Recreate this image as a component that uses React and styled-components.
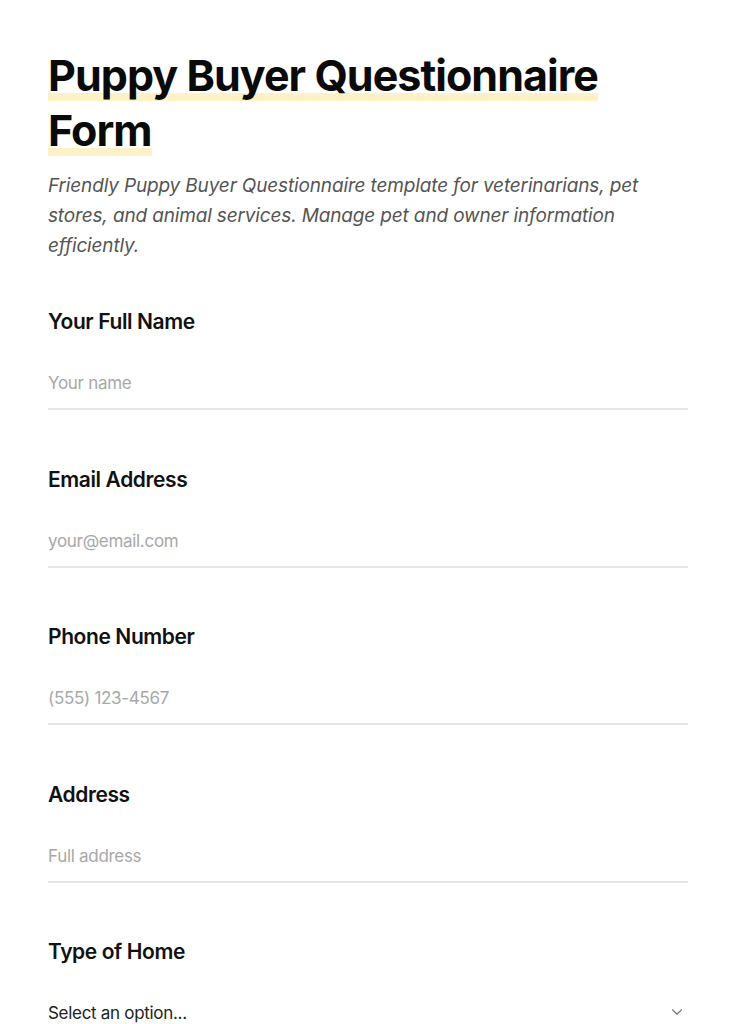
import React from 'react'
import styled, { createGlobalStyle } from 'styled-components'

const GlobalStyle = createGlobalStyle`
  body {
    margin: 0;
    background: #ffffff;
    font-family: Inter, "Open Sans", sans-serif;
    color: #111111;
  }
`

const fields = [
  { label: 'Your Full Name', placeholder: 'Your name', type: 'text' },
  { label: 'Email Address', placeholder: 'your@email.com', type: 'email' },
  { label: 'Phone Number', placeholder: '(555) 123-4567', type: 'tel' },
  { label: 'Address', placeholder: 'Full address', type: 'text' },
]

const App = () => {
  return (
    <Page>
      <GlobalStyle />
      <Header>
        <Title>
          <Mark>Puppy Buyer Questionnaire Form</Mark>
        </Title>
        <Description>
          Friendly Puppy Buyer Questionnaire template for veterinarians, pet
          stores, and animal services. Manage pet and owner information
          efficiently.
        </Description>
      </Header>

      <Form>
        {fields.map((f) => (
          <Field key={f.label}>
            <Label>{f.label}</Label>
            <Input type={f.type} placeholder={f.placeholder} />
          </Field>
        ))}
        <Field>
          <Label>Type of Home</Label>
          <SelectWrap>
            <Select defaultValue="">
              <option value="" disabled>Select an option...</option>
              <option>House</option>
              <option>Apartment</option>
              <option>Condo</option>
            </Select>
            <Chevron viewBox="0 0 24 24">
              <path d="M6 9l6 6 6-6" />
            </Chevron>
          </SelectWrap>
        </Field>
      </Form>
    </Page>
  )
}

export default App

const Page = styled.div`
  width: 640px;
  padding: 48px 48px 40px;
`

const Header = styled.header`
  display: flex;
  flex-direction: column;
  gap: 13px;
`

const Title = styled.h1`
  margin: 0;
  font-size: 43px;
  font-weight: 700;
  line-height: 55px;
  letter-spacing: -0.95px;
  color: #0a0a0a;
  width: 610px;
`

const Mark = styled.span`
  background-image: linear-gradient(
    to bottom,
    transparent 84%,
    #fef1c8 84%,
    #fef1c8 100%
  );
  box-decoration-break: clone;
  -webkit-box-decoration-break: clone;
`

const Description = styled.p`
  margin: 0;
  font-size: 19px;
  font-style: italic;
  line-height: 30px;
  color: #555555;
  letter-spacing: -0.15px;
`

const Form = styled.form`
  display: flex;
  flex-direction: column;
  gap: 56.5px;
  margin-top: 48px;
`

const Field = styled.div`
  display: flex;
  flex-direction: column;
  gap: 33px;
`

const Label = styled.label`
  font-size: 21px;
  font-weight: 600;
  letter-spacing: -0.4px;
  color: #111111;
`

const Input = styled.input`
  border: none;
  border-bottom: 2px solid #e5e5e5;
  padding: 6px 0 15px;
  font-family: inherit;
  font-size: 17px;
  letter-spacing: -0.3px;
  color: #111111;
  outline: none;
  background: transparent;
  &::placeholder {
    color: #a8a8a8;
  }
`

const SelectWrap = styled.div`
  position: relative;
`

const Select = styled.select`
  width: 100%;
  appearance: none;
  border: none;
  border-bottom: 2px solid #e5e5e5;
  padding: 6px 0 15px;
  font-family: inherit;
  font-size: 17px;
  letter-spacing: -0.3px;
  color: #222222;
  background: transparent;
  outline: none;
`

const Chevron = styled.svg`
  position: absolute;
  right: 2px;
  top: 6px;
  width: 18px;
  height: 18px;
  fill: none;
  stroke: #777777;
  stroke-width: 1.5;
  stroke-linecap: round;
  stroke-linejoin: round;
  pointer-events: none;
`
